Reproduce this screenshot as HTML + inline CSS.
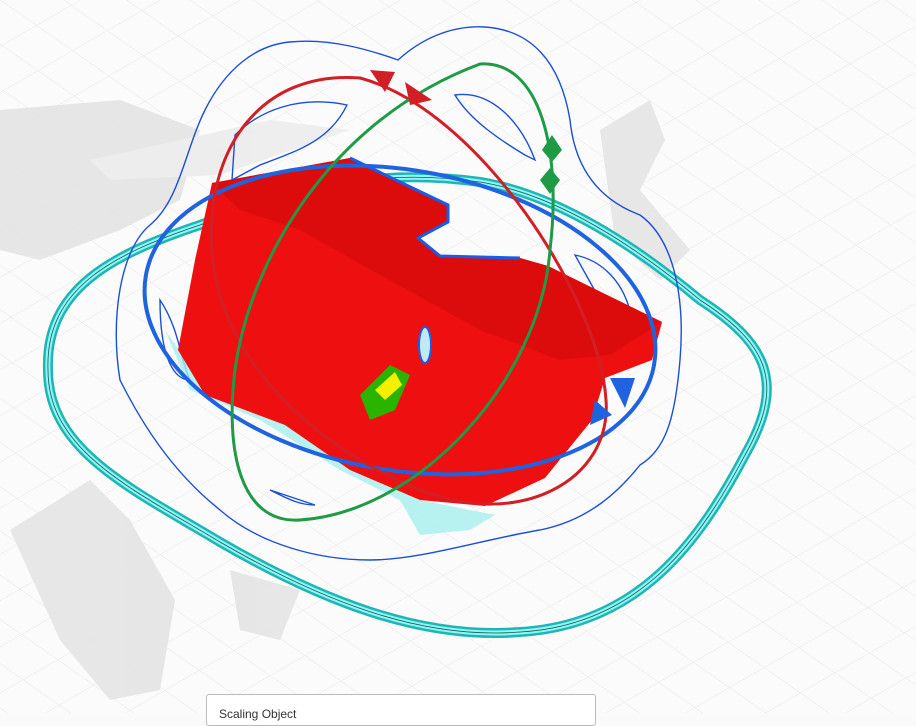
<!DOCTYPE html>
<html><head><style>
html,body{margin:0;padding:0;background:#fafafa;width:916px;height:713px;overflow:hidden;font-family:"Liberation Sans",sans-serif}
.box{position:absolute;left:206px;top:694px;width:388px;height:30px;background:#fff;border:1px solid #bbb;border-radius:3px}
.box span{position:absolute;left:12px;top:12px;font-size:12px;color:#333}
</style></head><body>
<svg width="916" height="713" style="position:absolute;left:0;top:0">
<defs>
<pattern id="g" width="40" height="40" patternUnits="userSpaceOnUse" patternTransform="rotate(-30) skewX(25)">
<path d="M0 0H40M0 0V40" stroke="#e6e6e6" stroke-width="1" fill="none"/>
</pattern>
</defs>
<rect width="916" height="713" fill="#fbfbfb"/>
<rect width="916" height="713" fill="url(#g)"/>
<g fill="#e4e4e4" opacity="0.9">
<path d="M0 110 L120 100 L200 130 L180 200 L120 230 L40 260 L0 250Z"/>
<path d="M600 130 L650 100 L665 140 L640 190 L690 250 L660 280 L615 240Z"/>
<path d="M10 530 L90 480 L130 520 L175 600 L160 690 L110 700 L60 640Z"/>
<path d="M230 570 L300 590 L280 640 L240 630Z"/>
<path d="M90 160 L270 120 L350 130 L220 175 L110 180Z" fill="#ececec"/>
</g>
<!-- cyan loop -->
<g fill="none">
<path d="M48 370 C45 290 110 255 200 225 C300 185 380 168 480 182 C560 195 640 250 700 300 C770 345 785 385 745 455 C700 540 640 625 520 632 C420 640 320 600 220 542 C130 488 48 450 48 370Z" stroke="#1fb5b5" stroke-width="10"/>
<path d="M48 370 C45 290 110 255 200 225 C300 185 380 168 480 182 C560 195 640 250 700 300 C770 345 785 385 745 455 C700 540 640 625 520 632 C420 640 320 600 220 542 C130 488 48 450 48 370Z" stroke="#8ff4f2" stroke-width="5"/>
<path d="M48 370 C45 290 110 255 200 225 C300 185 380 168 480 182 C560 195 640 250 700 300 C770 345 785 385 745 455 C700 540 640 625 520 632 C420 640 320 600 220 542 C130 488 48 450 48 370Z" stroke="#0a6060" stroke-width="0.8"/>
</g>
<!-- thin blue -->
<g fill="none" stroke="#1a4fd6" stroke-width="1.4">
<path d="M290 42 C330 38 370 50 398 60 C420 40 450 25 485 27 C530 30 560 60 570 120 C575 170 600 200 640 215 C675 240 685 300 680 360 C675 420 665 450 640 465 C620 490 590 520 540 530 C480 540 420 560 370 560 C320 560 260 545 220 510 C170 470 140 420 120 380 C110 320 120 250 150 225 C180 200 185 150 205 110 C225 70 255 45 290 42Z"/>
<path d="M235 135 C260 110 300 95 347 105 C330 140 300 150 260 165 L232 180Z"/>
<path d="M455 95 C490 90 520 120 535 160 L525 155 C500 140 470 120 455 95Z"/>
<path d="M575 255 C600 260 625 280 632 320 C620 330 610 320 600 300Z"/>
<path d="M160 300 C180 330 180 360 190 380 C175 380 160 360 160 300Z"/>
<path d="M270 490 C290 500 300 505 315 505 L285 495Z"/>
</g>
<!-- light cyan under -->
<path d="M165 330 L190 390 L260 420 L340 470 L400 500 L420 535 L470 530 L495 515 L420 500 L340 460 L270 410 L200 380Z" fill="#a8f0ee" opacity="0.8"/>
<!-- red body -->
<path d="M212 183 L350 158 L448 205 L448 222 L418 238 L440 256 L520 258 L548 266 L662 322 L652 360 L605 378 L592 420 L545 478 L485 506 L420 500 L350 470 L285 425 L205 395 L178 350 L195 260Z" fill="#ee1010"/>
<path d="M212 183 L350 158 L448 205 L448 222 L418 238 L440 256 L520 258 L548 266 L662 322 L610 355 L560 360 L480 330 L380 275 L300 230 L240 210Z" fill="#dc0c0c"/>
<path d="M350 158 L448 205 L448 222 L418 238 L440 256 L520 258" fill="none" stroke="#1a5be8" stroke-width="3"/>
<ellipse cx="425" cy="345" rx="6" ry="18" fill="#bfe9f5" stroke="#1a5be8" stroke-width="2"/>
<path d="M360 395 L390 365 L410 375 L395 410 L370 420Z" fill="#2ab400"/>
<path d="M375 390 L395 372 L402 385 L385 400Z" fill="#f5f000"/>
<!-- thick blue ring -->
<ellipse cx="400" cy="320" rx="258" ry="150" transform="rotate(10 400 320)" fill="none" stroke="#1f63e0" stroke-width="4"/>
<!-- red ring -->
<path d="M360 78 C260 70 205 150 212 250 C218 350 300 440 420 490 C520 530 612 480 606 400 C600 300 480 110 360 78Z" fill="none" stroke="#d21f26" stroke-width="3"/>
<!-- green ring -->
<path d="M480 64 C540 60 562 150 550 250 C540 380 420 512 300 520 C240 524 225 450 235 370 C250 260 330 120 480 64Z" fill="none" stroke="#1f9a45" stroke-width="3"/>
<!-- arrows -->
<path d="M370 70 L395 72 L385 92Z" fill="#d21f26"/>
<path d="M405 82 L432 100 L410 105Z" fill="#d21f26"/>
<path d="M552 135 L562 150 L552 162 L542 150Z" fill="#1f9a45"/>
<path d="M550 168 L560 180 L550 194 L540 180Z" fill="#1f9a45"/>
<path d="M610 378 L635 378 L625 408Z" fill="#1f63e0"/>
<path d="M595 400 L612 415 L590 425Z" fill="#1f63e0"/>
</svg>
<div class="box"><span>Scaling Object</span></div>
</body></html>
